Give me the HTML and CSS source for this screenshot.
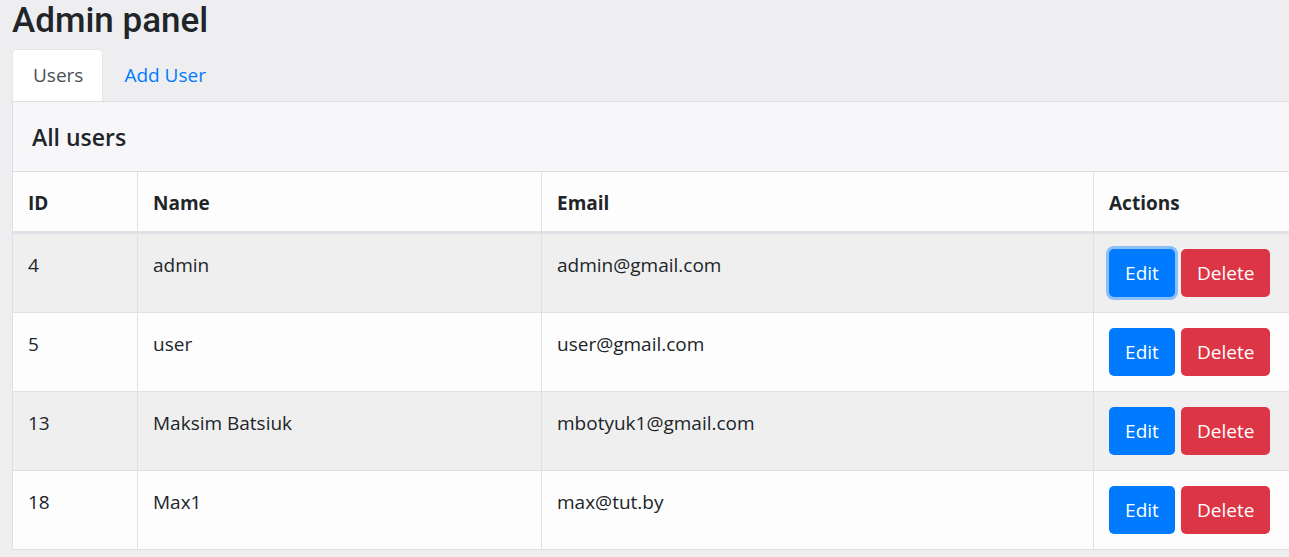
FILE: index.html
```html
<!DOCTYPE html>
<html lang="en">
<head>
    <meta charset="UTF-8">
    <meta name="viewport" content="width=device-width, initial-scale=1.0">
    <title>Admin panel</title>
    <link rel="stylesheet" href="styles.css">
</head>
<body>
    <div class="container">
        <h1>Admin panel</h1>
        <ul class="tabs">
            <li><a href="#" class="tab active">Users</a></li>
            <li><a href="#" class="tab">Add User</a></li>
        </ul>
        <div class="card">
            <div class="card-header">All users</div>
            <table class="users">
                <thead>
                    <tr>
                        <th class="col-id">ID</th>
                        <th class="col-name">Name</th>
                        <th class="col-email">Email</th>
                        <th>Actions</th>
                    </tr>
                </thead>
                <tbody>
                    <tr>
                        <td>4</td>
                        <td>admin</td>
                        <td>admin@gmail.com</td>
                        <td><button class="btn btn-edit focus">Edit</button><button class="btn btn-delete">Delete</button></td>
                    </tr>
                    <tr>
                        <td>5</td>
                        <td>user</td>
                        <td>user@gmail.com</td>
                        <td><button class="btn btn-edit">Edit</button><button class="btn btn-delete">Delete</button></td>
                    </tr>
                    <tr>
                        <td>13</td>
                        <td>Maksim Batsiuk</td>
                        <td>mbotyuk1@gmail.com</td>
                        <td><button class="btn btn-edit">Edit</button><button class="btn btn-delete">Delete</button></td>
                    </tr>
                    <tr>
                        <td>18</td>
                        <td>Max1</td>
                        <td>max@tut.by</td>
                        <td><button class="btn btn-edit">Edit</button><button class="btn btn-delete">Delete</button></td>
                    </tr>
                </tbody>
            </table>
        </div>
    </div>
</body>
</html>
```

FILE: styles.css
```css
body {
    font-family: "Open Sans", "Noto Sans", sans-serif;
    font-size: 19px;
    color: #212529;
    background-color: #eeeef0;
    margin: 0;
    padding: 0;
    overflow: hidden;
}
.container {
    padding: 0 0 0 12px;
    width: 1290px;
}
h1 {
    font-family: Roboto, "Open Sans", sans-serif;
    font-size: 35px;
    font-weight: 500;
    line-height: 41px;
    margin: 0 0 8px;
}
.tabs {
    list-style: none;
    margin: 0;
    padding: 0;
    display: flex;
}
.tab {
    display: block;
    padding: 0 19px 0 20px;
    line-height: 51px;
    color: #007bff;
    text-decoration: none;
    border: 1px solid transparent;
    border-bottom: none;
    border-radius: 5px 5px 0 0;
}
.tab.active {
    background-color: #fff;
    color: #495057;
    border-color: #e6e6e8;
}
.card {
    background-color: #fdfdfd;
    border: 1px solid #dfdfe1;
    border-right: none;
    border-radius: 0;
}
.card-header {
    background-color: #f7f7f9;
    font-size: 23px;
    font-weight: 600;
    padding: 20px 19px 19px;
    line-height: 30px;
    border-bottom: 1px solid #dfdfe1;
}
.users {
    width: 100%;
    border-collapse: collapse;
}
.users th,
.users td {
    text-align: left;
    vertical-align: top;
    padding: 15px;
    line-height: 30px;
    border-left: 1px solid #dee2e6;
    border-top: 1px solid #dee2e6;
}
.users th:first-child,
.users td:first-child {
    border-left: none;
}
.users thead th {
    font-weight: 700;
    padding: 16px 15px 13px;
    border-top: none;
    border-bottom: 3px solid #dee2e6;
}
.users thead tr {
    background-color: #fdfdfd;
}
.users tbody tr:nth-child(odd) {
    background-color: #efefef;
}
.users tbody tr:nth-child(1) td {
    border-top: none;
}
.users tbody td {
    padding-top: 16px;
    padding-bottom: 14px;
}
.users tbody td:last-child {
    padding-top: 15px;
    padding-bottom: 15px;
}
.col-id {
    width: 94px;
}
.col-name {
    width: 373px;
}
.col-email {
    width: 521px;
}
.btn {
    font-family: inherit;
    font-size: 19px;
    color: #fff;
    border: none;
    border-radius: 5px;
    height: 48px;
    line-height: 48px;
    padding: 0 16px;
    margin-right: 6px;
    cursor: pointer;
    vertical-align: top;
}
.btn-edit {
    background-color: #007bff;
    width: 66px;
}
.btn-edit.focus {
    box-shadow: 0 0 0 3px rgba(38, 143, 255, 0.5);
}
.btn-delete {
    background-color: #dc3545;
    width: 89px;
}
```
